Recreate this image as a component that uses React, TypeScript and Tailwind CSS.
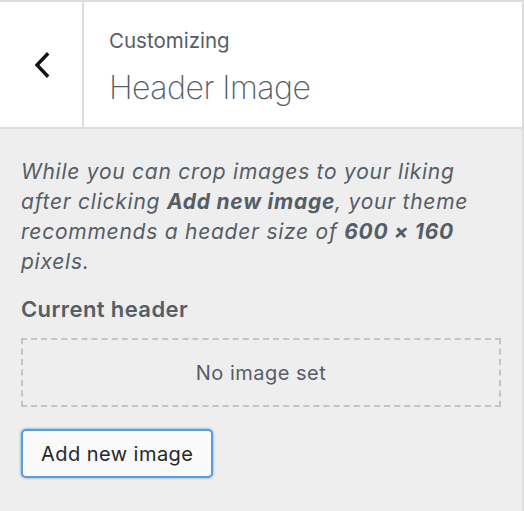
export default function App() {
  return (
    <div
      className="h-[511px] w-[524px] overflow-hidden border-r-2 border-[#ddd] bg-[#eee] text-[#555d66]"
      style={{ fontFamily: 'Inter, "Noto Sans", sans-serif' }}
    >
      {/* header */}
      <div className="flex h-[129px] border-t-2 border-b-2 border-[#ddd] bg-white">
        <button className="flex w-[84px] shrink-0 items-center justify-center border-r-2 border-[#ddd] pl-[2px]">
          <svg width="16" height="26" viewBox="0 0 16 26" fill="none">
            <polyline
              points="13,2.5 3,13 13,23.5"
              stroke="#111"
              strokeWidth="3.4"
              strokeLinecap="square"
            />
          </svg>
        </button>
        <div className="flex flex-col pl-[25px] pt-[25px]">
          <span className="text-[20.5px] leading-[28px] tracking-[0px]">Customizing</span>
          <h2 className="mt-[13px] text-[32px] font-extralight leading-[40px] tracking-[-0.5px]">
            Header Image
          </h2>
        </div>
      </div>

      {/* body */}
      <div className="px-[21px] pt-[28px]">
        <p className="text-[21px] italic leading-[30px] tracking-[0.75px]">
          While you can crop images to your liking after clicking{' '}
          <strong className="font-bold">Add new image</strong>, your theme recommends a header size
          of <strong className="font-bold">600 × 160</strong> pixels.
        </p>
        <h3 className="mt-[17px] text-[22px] font-semibold leading-[30px] tracking-[0.4px]">
          Current header
        </h3>
        <div className="mt-[14px] flex h-[69px] items-center justify-center border-2 border-dashed border-[#c3c4c7] text-[20px] tracking-[0.5px]">
          No image set
        </div>
        <button className="mt-[22px] h-[49px] rounded-[5px] border-2 border-[#5b9dd9] bg-[#fafafa] px-[18px] text-[20px] tracking-[0.45px] text-[#23282d] shadow-[0_0_3px_rgba(0,115,170,0.6)]">
          Add new image
        </button>
      </div>
    </div>
  );
}
